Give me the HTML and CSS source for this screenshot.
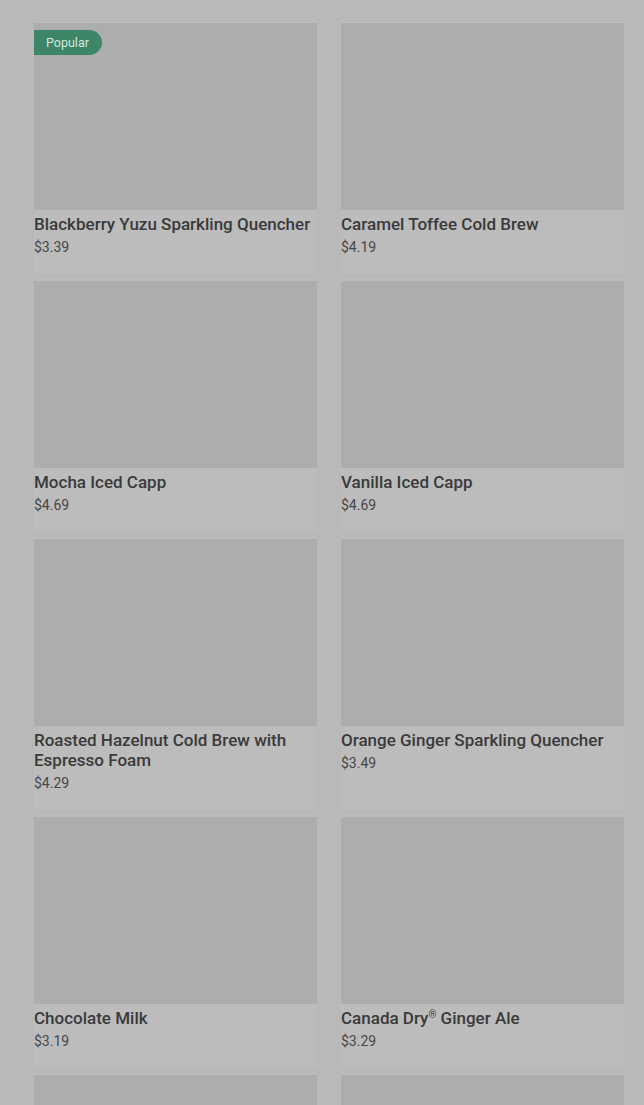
FILE: index.html
```html
<html>
<head>
<link rel="stylesheet" href="styles.css">
</head>
<body>
  <div class="menu">
    <div class="grid">
      <div class="card">
        <div class="photo">
          <span class="badge">Popular</span>
        </div>
        <div class="name">Blackberry Yuzu Sparkling Quencher</div>
        <div class="price">$3.39</div>
      </div>
      <div class="card">
        <div class="photo"></div>
        <div class="name">Caramel Toffee Cold Brew</div>
        <div class="price">$4.19</div>
      </div>

      <div class="card">
        <div class="photo"></div>
        <div class="name">Mocha Iced Capp</div>
        <div class="price">$4.69</div>
      </div>
      <div class="card">
        <div class="photo"></div>
        <div class="name">Vanilla Iced Capp</div>
        <div class="price">$4.69</div>
      </div>

      <div class="card">
        <div class="photo"></div>
        <div class="name">Roasted Hazelnut Cold Brew with Espresso Foam</div>
        <div class="price">$4.29</div>
      </div>
      <div class="card">
        <div class="photo"></div>
        <div class="name">Orange Ginger Sparkling Quencher</div>
        <div class="price">$3.49</div>
      </div>

      <div class="card">
        <div class="photo"></div>
        <div class="name">Chocolate Milk</div>
        <div class="price">$3.19</div>
      </div>
      <div class="card">
        <div class="photo"></div>
        <div class="name">Canada Dry<sup class="reg">&reg;</sup> Ginger Ale</div>
        <div class="price">$3.29</div>
      </div>

      <div class="card">
        <div class="photo"></div>
      </div>
      <div class="card">
        <div class="photo"></div>
      </div>
    </div>
  </div>
</body>
</html>
```

FILE: styles.css
```css
html, body {
  margin: 0;
  padding: 0;
  background-color: #b9b9b9;
  font-family: Roboto, "Liberation Sans", sans-serif;
  overflow: hidden;
  height: 1105px;
}

.menu {
  padding: 21px 20px 0 34px;
}

.grid {
  display: grid;
  grid-template-columns: 283px 283px;
  column-gap: 24px;
  row-gap: 6px;
}

.card {
  background-color: #bcbcbc;
  padding: 2px 0 16px;
}

.photo {
  height: 187px;
  background-color: #adadad;
  padding-top: 7px;
  box-sizing: border-box;
}

.badge {
  display: inline-block;
  height: 25px;
  line-height: 25px;
  padding: 0 13px 0 12px;
  border-radius: 0 13px 13px 0;
  background-color: #3d8768;
  color: #d5e6dc;
  font-size: 12.5px;
}

.name {
  margin-top: 4px;
  font-size: 17px;
  font-weight: 500;
  line-height: 20px;
  color: #3a3a3a;
}

.reg {
  font-size: 10px;
  line-height: 0;
  vertical-align: 6px;
}

.price {
  margin-top: 3px;
  font-size: 14px;
  line-height: 20px;
  color: #474747;
}
```
